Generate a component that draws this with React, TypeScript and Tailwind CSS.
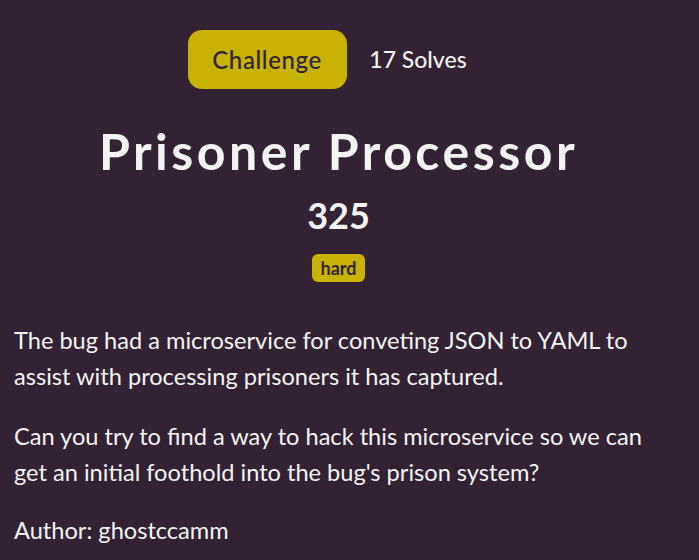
export default function App() {
  return (
    <div className="min-h-[560px] bg-[#332233] pt-[30px] pl-[14px] pr-[36px] text-[#f4f4f4]" style={{ fontFamily: 'Lato, "Open Sans", sans-serif' }}>
      {/* Tabs */}
      <div className="flex justify-center">
        <button className="h-[59px] w-[159px] rounded-[14px] bg-[#c8b400] text-[24px] font-medium tracking-[0.6px] text-[#332233]">
          Challenge
        </button>
        <button className="h-[59px] w-[143px] text-[23px] font-medium text-[#f4f4f4]">
          17 Solves
        </button>
      </div>

      {/* Heading */}
      <div className="mt-[34px] flex flex-col items-center">
        <h1 className="text-[50px] font-bold leading-[56px] tracking-[3.5px]">Prisoner Processor</h1>
        <h2 className="mt-[16px] text-[36px] font-bold leading-[40px]">325</h2>
        <span className="mt-[19px] rounded-[6px] bg-[#c8b400] px-[9px] text-[18px] font-bold leading-[28px] text-[#332233]">
          hard
        </span>
      </div>

      {/* Description */}
      <div className="mt-[40px] text-[23.6px] leading-[36px]">
        <p>The bug had a microservice for conveting JSON to YAML to assist with processing prisoners it has captured.</p>
        <p className="mt-[24px]">Can you try to find a way to hack this microservice so we can get an initial foothold into the bug's prison system?</p>
        <p className="mt-[22px]">Author: ghostccamm</p>
      </div>
    </div>
  )
}
